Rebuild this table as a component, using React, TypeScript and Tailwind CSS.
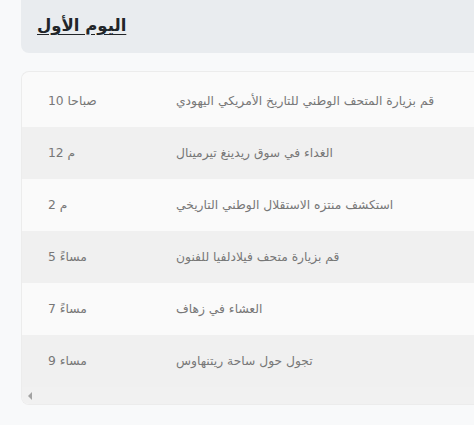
const rows = [
  { time: "صباحا 10", activity: "قم بزيارة المتحف الوطني للتاريخ الأمريكي اليهودي" },
  { time: "م 12", activity: "الغداء في سوق ريدينغ تيرمينال" },
  { time: "م 2", activity: "استكشف منتزه الاستقلال الوطني التاريخي" },
  { time: "مساءً 5", activity: "قم بزيارة متحف فيلادلفيا للفنون" },
  { time: "مساءً 7", activity: "العشاء في زهاف" },
  { time: "مساء 9", activity: "تجول حول ساحة ريتنهاوس" },
];

export default function App() {
  return (
    <div
      className="h-[425px] w-[474px] overflow-hidden bg-[#f8f9fa] pl-[21px]"
      style={{ fontFamily: '"DejaVu Sans", "Noto Sans", sans-serif' }}
    >
      <div className="mr-[-24px] flex h-[53px] items-center rounded-bl-lg bg-[#e9ecef] pl-4">
        <h2 className="text-[16.5px] font-bold text-[#212529] underline underline-offset-[3px]">
          اليوم الأول
        </h2>
      </div>

      <div className="mt-[18px] mr-[-24px] overflow-hidden rounded-l-lg border border-r-0 border-[#ececec] bg-[#fafafa] pt-[3px]">
        {rows.map((row, i) => (
          <div
            key={row.time}
            className={`grid h-[52px] grid-cols-[128px_1fr] items-center text-[12.3px] text-[#777] ${
              i % 2 === 1 ? "bg-[#f0f0f0]" : "bg-[#fafafa]"
            }`}
          >
            <div className="pl-[26px]">{row.time}</div>
            <div className="pl-[26px]">{row.activity}</div>
          </div>
        ))}
        <div className="flex h-[17px] items-center bg-[#f1f1f1] pl-[6px]">
          <div className="h-0 w-0 border-y-[4px] border-r-[4px] border-y-transparent border-r-[#a3a3a3]" />
        </div>
      </div>
    </div>
  );
}
